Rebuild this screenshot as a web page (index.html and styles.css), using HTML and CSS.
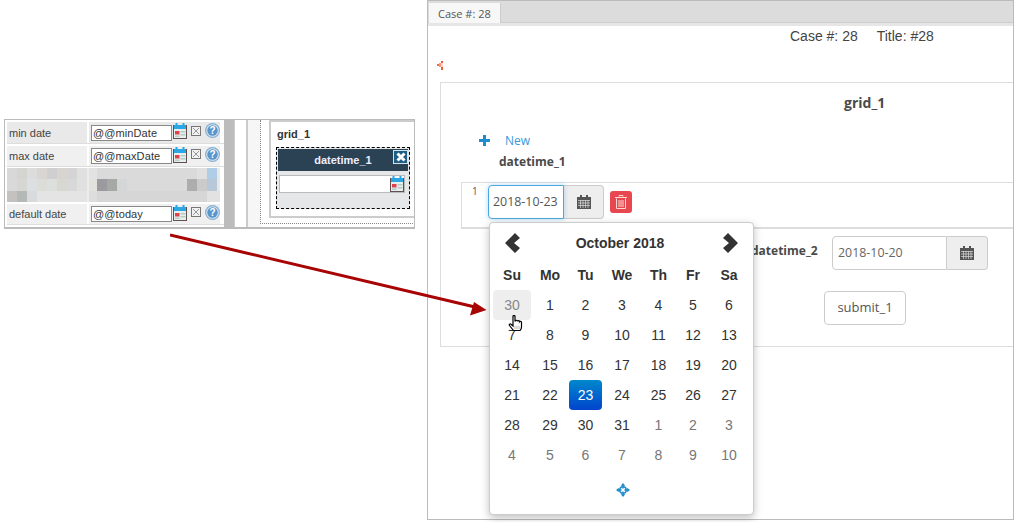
FILE: index.html
```html
<!DOCTYPE html>
<html lang="en">
<head>
<meta charset="utf-8">
<title>Case 28</title>
<link rel="stylesheet" href="styles.css">
</head>
<body>
<svg width="0" height="0" class="defs">
  <defs>
    <symbol id="cal" viewBox="0 0 14 16">
      <rect x="0.5" y="2.500" width="13" height="13" fill="#e6eeee" stroke="#5f5050"/>
      <rect x="1" y="2" width="12" height="4" fill="#2aa7e4"/>
      <rect x="2.500" y="0" width="2" height="3.500" fill="#2aa7e4"/>
      <rect x="9.500" y="0" width="2" height="3.500" fill="#2aa7e4"/>
      <rect x="2" y="8" width="4.500" height="3.500" fill="#e0424b"/>
      <rect x="7.500" y="8" width="5" height="1.500" fill="#b6ccc4"/>
      <rect x="7.500" y="11" width="5" height="1.500" fill="#b6ccc4"/>
      <rect x="2" y="12.500" width="4.500" height="1.500" fill="#b6ccc4"/>
    </symbol>
    <symbol id="x" viewBox="0 0 10 10">
      <rect x="0.5" y="0.5" width="9" height="9" fill="#f2f2f2" stroke="#777"/>
      <path d="M2 2l6 6M8 2L2 8" stroke="#999" stroke-width="1"/>
    </symbol>
    <symbol id="help" viewBox="0 0 15 15">
      <circle cx="7.500" cy="7.500" r="7.500" fill="#86aed2"/>
      <circle cx="7.500" cy="7.500" r="6.300" fill="#d6e4f0"/>
      <circle cx="7.500" cy="7.500" r="5.200" fill="#5a94cc"/>
      <text x="7.500" y="11" text-anchor="middle" font-family="Liberation Sans" font-size="10" font-weight="700" fill="#fff">?</text>
    </symbol>
    <symbol id="fa-cal" viewBox="0 0 14 14">
      <path d="M0 2h3V0h2v2h4V0h2v2h3v12H0z" fill="#555"/>
      <path d="M1 5.500h12M1 8h12M1 10.500h12M3.500 5v8M6 5v8M8.500 5v8M11 5v8" stroke="#ddd" stroke-width="0.700"/>
    </symbol>
  </defs>
</svg>

<section class="designer">
  <div class="props">
    <div class="prop-row">
      <span class="prop-label">min date</span>
      <span class="prop-value"><span class="prop-input">@@minDate</span><svg class="i-cal"><use href="#cal"/></svg><svg class="i-x"><use href="#x"/></svg><svg class="i-help"><use href="#help"/></svg></span>
    </div>
    <div class="prop-row">
      <span class="prop-label">max date</span>
      <span class="prop-value"><span class="prop-input">@@maxDate</span><svg class="i-cal"><use href="#cal"/></svg><svg class="i-x"><use href="#x"/></svg><svg class="i-help"><use href="#help"/></svg></span>
    </div>
    <svg class="blur" width="213" height="34" viewBox="0 0 213 34" shape-rendering="crispEdges">
      <rect width="213" height="34" fill="#dadada"/>
      <rect x="0" width="10" height="11" fill="#d8d8d8"/><rect x="10" width="10" height="11" fill="#d4d4d0"/>
      <rect x="20" width="10" height="11" fill="#dcdcdc"/><rect x="30" width="10" height="11" fill="#d8d5d2"/>
      <rect x="40" width="10" height="11" fill="#cfcfd1"/><rect x="50" width="10" height="11" fill="#d8d5d0"/>
      <rect x="60" width="10" height="11" fill="#d4d4d4"/><rect x="70" width="10" height="11" fill="#e0e0e0"/>
      <rect x="82" width="8" height="11" fill="#e2e2e2"/><rect x="190" width="10" height="11" fill="#e0e0e0"/>
      <rect x="200" width="10" height="11" fill="#afcde6"/><rect x="210" width="3" height="11" fill="#e8e8e8"/>
      <rect x="0" y="11" width="10" height="12" fill="#d9d9d9"/><rect x="10" y="11" width="10" height="12" fill="#d6d6d2"/>
      <rect x="20" y="11" width="10" height="12" fill="#dde0e2"/><rect x="30" y="11" width="10" height="12" fill="#dcdcd8"/>
      <rect x="40" y="11" width="10" height="12" fill="#dce0dc"/><rect x="50" y="11" width="10" height="12" fill="#d9d7d2"/>
      <rect x="60" y="11" width="10" height="12" fill="#d8d8d8"/><rect x="70" y="11" width="10" height="12" fill="#e0e0e0"/>
      <rect x="82" y="11" width="8" height="12" fill="#e2e2dc"/><rect x="90" y="11" width="10" height="12" fill="#9c9a9e"/>
      <rect x="100" y="11" width="10" height="12" fill="#a6a8a6"/><rect x="110" y="11" width="10" height="12" fill="#d4d6d8"/>
      <rect x="180" y="11" width="10" height="12" fill="#adadad"/><rect x="190" y="11" width="10" height="12" fill="#cbcbcb"/>
      <rect x="200" y="11" width="10" height="12" fill="#b8c8d8"/><rect x="210" y="11" width="3" height="12" fill="#e8e8e8"/>
      <rect x="0" y="23" width="10" height="11" fill="#c4c2c0"/><rect x="10" y="23" width="10" height="11" fill="#b4b8b6"/>
      <rect x="20" y="23" width="10" height="11" fill="#d8dadc"/><rect x="30" y="23" width="50" height="11" fill="#e4e4e4"/>
      <rect x="82" y="23" width="8" height="11" fill="#dddddd"/><rect x="90" y="23" width="110" height="11" fill="#d6d6d6"/>
      <rect x="200" y="23" width="13" height="11" fill="#e2e2e2"/>
      <rect x="80" y="0" width="2" height="34" fill="#ececec"/>
    </svg>
    <div class="prop-row">
      <span class="prop-label">default date</span>
      <span class="prop-value"><span class="prop-input">@@today</span><svg class="i-cal"><use href="#cal"/></svg><svg class="i-x"><use href="#x"/></svg><svg class="i-help"><use href="#help"/></svg></span>
    </div>
    <div class="prop-row prop-stub"></div>
  </div>
  <div class="scrollbar"></div>
  <div class="gutter"></div>
  <div class="canvas">
    <div class="grid-box">
      <div class="grid-title">grid_1</div>
      <div class="field-box">
        <div class="field-head">datetime_1<span class="field-close">
          <svg width="10" height="10" viewBox="0 0 10 10"><path d="M1.500 1.500l7 7M8.500 1.500l-7 7" stroke="#fff" stroke-width="3"/></svg>
        </span></div>
        <div class="field-input"><svg class="i-cal"><use href="#cal"/></svg></div>
      </div>
    </div>
  </div>
</section>

<section class="window">
  <nav class="tabs"><span class="tab">Case #: 28</span></nav>
  <div class="tabs-sub"></div>
  <div class="case-line"><span>Case #: 28</span><span>Title: #28</span></div>
  <div class="mini">
    <svg width="6" height="9" viewBox="0 0 6 9" shape-rendering="crispEdges"><rect x="4" y="0" width="2" height="2" fill="#ee5a3a"/><rect x="2" y="2" width="2" height="4" fill="#f49a80"/><rect x="4" y="2" width="2" height="4" fill="#fbd5c8"/><rect x="0" y="3" width="2" height="2" fill="#ee6a4a"/><rect x="4" y="6" width="2" height="3" fill="#ee5a3a"/></svg>
  </div>
  <div class="form-box">
    <h2 class="form-title">grid_1</h2>
    <div class="new-row">
      <svg width="11" height="11" viewBox="0 0 11 11"><path d="M4 0h3v4h4v3H7v4H4V7H0V4h4z" fill="#1f8ccb"/></svg>
      <a class="new-link">New</a>
    </div>
    <div class="col-head">datetime_1</div>
    <div class="grid-row">
      <span class="row-num">1</span>
      <span class="date-group focused">
        <span class="date-input">2018-10-23</span>
        <span class="date-addon"><svg width="14" height="14"><use href="#fa-cal"/></svg></span>
      </span>
      <button class="del-btn" type="button">
        <svg width="12" height="14" viewBox="0 0 12 14"><path d="M4 1.500V.5h4v1M0 2.500h12M1.500 3.500V13.500h9V3.500M4 5v7M6 5v7M8 5v7" fill="none" stroke="#ffd9d2" stroke-width="1"/></svg>
      </button>
    </div>
    <div class="lower">
      <div class="dt2-row">
        <label class="dt2-label">datetime_2</label>
        <span class="date-group wide">
          <span class="date-input">2018-10-20</span>
          <span class="date-addon"><svg width="14" height="14"><use href="#fa-cal"/></svg></span>
        </span>
      </div>
      <button class="submit" type="button">submit_1</button>
    </div>
  </div>

  <div class="picker">
    <div class="pick-head">
      <svg class="chev" width="17" height="20" viewBox="0 0 17 20"><path d="M10 0l5 5-6 5 6 5-5 5L0 10z" fill="#333"/></svg>
      <span class="pick-title">October 2018</span>
      <svg class="chev" width="17" height="20" viewBox="0 0 17 20"><path d="M6 0l-5 5 6 5-6 5 5 5 10-10z" fill="#333"/></svg>
    </div>
    <div class="days">
      <b>Su</b><b>Mo</b><b>Tu</b><b>We</b><b>Th</b><b>Fr</b><b>Sa</b>
      <span class="old hover">30</span><span>1</span><span>2</span><span>3</span><span>4</span><span>5</span><span>6</span>
      <span>7</span><span>8</span><span>9</span><span>10</span><span>11</span><span>12</span><span>13</span>
      <span>14</span><span>15</span><span>16</span><span>17</span><span>18</span><span>19</span><span>20</span>
      <span>21</span><span>22</span><span class="active">23</span><span>24</span><span>25</span><span>26</span><span>27</span>
      <span>28</span><span>29</span><span>30</span><span>31</span><span class="old">1</span><span class="old">2</span><span class="old">3</span>
      <span class="old">4</span><span class="old">5</span><span class="old">6</span><span class="old">7</span><span class="old">8</span><span class="old">9</span><span class="old">10</span>
    </div>
    <div class="pick-foot">
      <svg width="14" height="14" viewBox="0 0 15 15"><path d="M7.500 0l2.500 3H5zM7.500 15L5 12h5zM0 7.500L3 5v5zM15 7.500L12 10V5z" fill="#1f8ccb"/><path d="M7.500 2v4M7.500 9v4M2 7.500h4M9 7.500h4" stroke="#1f8ccb" stroke-width="1.600"/><circle cx="7.500" cy="7.500" r="3.500" fill="none" stroke="#1f8ccb" stroke-width="1.600"/></svg>
    </div>
    <svg class="hand" width="16" height="16" viewBox="0.500 0 14 16"><path d="M4.500 1.200c0-1 2-1 2 0V6h.5c.3-1 2-1 2 .2.3-.8 2-.8 2 .4.400-.6 2-.4 2 .8V12c0 1-1 3-1.500 3.500h-6.500L1 10.500c-.8-1 .6-2.200 1.500-1.300l2 1.800z" fill="#fff" stroke="#000" stroke-width="1.200"/><path d="M6.500 11v3M8.500 11v3M10.500 11v3" stroke="#aaa" stroke-width=".8"/></svg>
  </div>
</section>

<svg class="arrow" width="330" height="90" viewBox="0 0 330 90">
  <path d="M0 4L305 76" stroke="#a80404" stroke-width="3" fill="none"/>
  <path d="M316.500 79L300 84.500 304 71z" fill="#a80404"/>
</svg>
</body>
</html>
```
FILE: styles.css
```css
* { box-sizing: border-box; }
html, body { margin: 0; padding: 0; }
body {
  position: relative;
  width: 1015px;
  height: 522px;
  overflow: hidden;
  background: #fff;
  font-family: "Liberation Sans", Arial, sans-serif;
  color: #333;
}
.defs { position: absolute; }

/* left: cropped designer screenshot */
.designer {
  position: absolute;
  left: 4px;
  top: 119px;
  width: 411px;
  height: 110px;
  border: 1px solid #bbb;
  border-width: 1px 1px 2px;
  display: flex;
  overflow: hidden;
  background: #fff;
}
.props {
  width: 219px;
  padding: 2px 0 0 2px;
  display: flex;
  flex-direction: column;
  gap: 2px;
  flex: none;
}
.prop-row {
  display: flex;
  gap: 2px;
  height: 21px;
  flex: none;
  border-bottom: 1px solid #ddd;
}
.prop-row:first-child { height: 22px; }
.prop-stub { height: 3px; border: 0; background: #f0f0f0; }
.prop-label {
  width: 80px;
  background: #f0f0f0;
  color: #444;
  font-size: 11px;
  line-height: 20px;
  padding-left: 2px;
}
.prop-row:first-child .prop-label { background: #e9e9e9; line-height: 22px; }
.prop-value {
  width: 131px;
  background: #f0f0f0;
  display: flex;
  align-items: center;
  padding-left: 2px;
}
.prop-row:first-child .prop-value { background: #e9e9e9; }
.prop-input {
  width: 82px;
  height: 16px;
  border: 1px solid #888;
  background: #fff;
  font-size: 11px;
  line-height: 15px;
  padding-left: 1px;
  color: #333;
  letter-spacing: 0.1px;
}
.i-cal { width: 14px; height: 16px; margin: -3px 0 0 1px; flex: none; }
.i-x { width: 10px; height: 10px; margin: -4px 0 0 4px; flex: none; }
.i-help { width: 15px; height: 15px; margin: -4px 0 0 4px; flex: none; }
.blur { flex: none; margin-top: -1px; display: block; }
.scrollbar { width: 11px; background: #bcbcbc; border-right: 1px solid #ccc; flex: none; }
.gutter { width: 13px; flex: none; border-right: 2px solid #ccc; box-shadow: inset 2px 0 0 #fff; background: #fff; position: relative; }
.canvas {
  flex: 1;
  padding: 0 0 0 20px;
  background: linear-gradient(#f6f6f6, #f6f6f6) 0 0 / 13px 100% no-repeat;
  position: relative;
}
.grid-box {
  position: relative;
  margin-left: 1px;
  height: 98px;
  width: 160px;
  border: 2px solid #ccc;
  background: #fff;
  padding: 4px 0 0 5px;
  margin-bottom: 6px;
}
.canvas::before {
  content: "";
  position: absolute;
  left: 12px;
  top: 0;
  bottom: 3px;
  right: 0;
  border-left: 1px dotted #888;
  border-bottom: 1px dotted #888;
}
.grid-title { font-size: 11px; font-weight: 700; line-height: 16px; margin-bottom: 5px; padding-left: 1px; }
.field-box {
  width: 134px;
  height: 62px;
  border: 1px dashed #000;
  padding: 1px;
  background: #e6e7e8;
}
.field-head {
  height: 22px;
  background: #2b4255;
  color: #eef;
  font-size: 11px;
  font-weight: 700;
  line-height: 22px;
  text-align: center;
  position: relative;
}
.field-close {
  position: absolute;
  right: 0;
  top: 1px;
  width: 15px;
  height: 14px;
  background: #1d5f86;
  border: 1px solid #d5e3ea;
  display: flex;
  align-items: center;
  justify-content: center;
}
.field-input {
  margin: 4px 3px 0 1px;
  width: 126px;
  height: 18px;
  background: #fff;
  border: 1px solid #bbb;
  display: flex;
  justify-content: flex-end;
}
.field-input .i-cal { margin: 0; }

/* right: case window */
.window {
  position: absolute;
  left: 427px;
  top: 0;
  width: 587px;
  height: 520px;
  border: 1px solid #bbb;
  background: #fff;
  font-family: "Open Sans", "Noto Sans", sans-serif;
}
.tabs {
  height: 22px;
  background: #dcdcdc;
  border-bottom: 1px solid #ccc;
  padding-left: 1px;
}
.tab {
  display: inline-block;
  width: 72px;
  height: 20px;
  background: #f7f7f7;
  border-right: 1px solid #ccc;
  font-size: 11px;
  line-height: 22px;
  padding-left: 9px;
  color: #555;
}
.tabs-sub { height: 3px; background: #e6e6e6; }
.case-line {
  height: 20px;
  padding-left: 362px;
  display: flex;
  gap: 19px;
  font-family: "Liberation Sans", Arial, sans-serif;
  font-size: 14px;
  line-height: 20px;
  color: #444;
}
.mini { height: 36px; padding: 15px 0 0 9px; line-height: 0; }
.form-box {
  margin-left: 12px;
  width: 573px;
  height: 265px;
  border: 1px solid #ddd;
  border-right: 0;
  position: relative;
}
.form-title {
  margin: 0;
  padding: 10px 0 0 403px;
  font-size: 14px;
  font-weight: 700;
  line-height: 20px;
  color: #4a4a4a;
}
.new-row {
  display: flex;
  align-items: center;
  gap: 15px;
  padding-left: 38px;
  margin-top: 17px;
  height: 20px;
}
.new-link { color: #3a9ad9; font-size: 12px; }
.col-head {
  padding-left: 58px;
  font-size: 12px;
  font-weight: 700;
  line-height: 20px;
  color: #4a4a4a;
  margin-top: 2px;
}
.grid-row {
  margin: 10px 0 0 20px;
  height: 47px;
  border-top: 1px solid #ddd;
  border-left: 1px solid #ddd;
  border-bottom: 2px solid #ddd;
  display: flex;
  align-items: flex-start;
  padding-top: 2px;
  position: relative;
}
.row-num { width: 26px; font-size: 10px; line-height: 11px; padding: 1px 0 0 10px; color: #555; flex: none; }
.date-group {
  display: flex;
  height: 34px;
  flex: none;
}
.date-input {
  width: 76px;
  border: 1px solid #ccc;
  border-radius: 4px 0 0 4px;
  font-size: 12.4px;
  line-height: 31px;
  padding-left: 4px;
  color: #555;
  background: #fff;
}
.focused .date-input {
  border-color: #4aa8e0;
  box-shadow: 0 0 5px rgba(102, 175, 233, .5);
  position: relative;
}
.date-addon {
  width: 41px;
  background: #eee;
  border: 1px solid #ccc;
  border-left: 0;
  border-radius: 0 4px 4px 0;
  display: flex;
  align-items: center;
  justify-content: center;
}
.focused .date-addon { width: 40px; }
.del-btn {
  width: 22px;
  height: 22px;
  margin: 6px 0 0 6px;
  padding: 0;
  border: 0;
  border-radius: 3px;
  background: #e8474f;
  display: flex;
  align-items: center;
  justify-content: center;
}
.lower { position: relative; }
.dt2-row {
  display: flex;
  padding: 7px 0 0 310px;
  align-items: flex-start;
  height: 50px;
}
.dt2-label {
  width: 81px;
  font-size: 12px;
  font-weight: 700;
  line-height: 30px;
  color: #4a4a4a;
  flex: none;
}
.wide .date-input { width: 115px; padding-left: 5px; color: #666; }
.submit {
  display: block;
  width: 82px;
  height: 34px;
  margin: 12px 0 0 383px;
  padding: 0 0 2px;
  border: 1px solid #ccc;
  border-radius: 4px;
  background: #fff;
  font: 13px "Open Sans", sans-serif;
  color: #555;
}

/* date picker popup */
.picker {
  position: absolute;
  left: 61px;
  top: 221px;
  width: 265px;
  height: 293px;
  background: #fff;
  border: 1px solid #ccc;
  border-radius: 4px;
  box-shadow: 0 3px 8px rgba(0, 0, 0, .25);
  font-family: "Liberation Sans", Arial, sans-serif;
  font-size: 14px;
  color: #333;
  padding: 10px 0 0 3px;
}
.pick-head {
  display: flex;
  align-items: center;
  justify-content: space-between;
  padding: 0 14px 0 12px;
  height: 20px;
}
.pick-title { font-weight: 700; margin-right: 4px; }
.days {
  margin: 7px 0 0 0;
  display: grid;
  grid-template-columns: 38px 38px 33px 40px 33px 36px 36px;
  grid-auto-rows: 30px;
  text-align: center;
  line-height: 30px;
}
.days b { font-weight: 700; }
.days .old { color: #777; }
.days .hover { background: #eee; border-radius: 4px; color: #888; }
.days .active { background: linear-gradient(#0088cc, #0044cc); color: #fff; border-radius: 4px; }
.pick-foot { display: flex; justify-content: center; padding: 13px 0 0 0; line-height: 0; }
.hand { position: absolute; left: 18px; top: 92px; }

.arrow { position: absolute; left: 170px; top: 231px; }
```
